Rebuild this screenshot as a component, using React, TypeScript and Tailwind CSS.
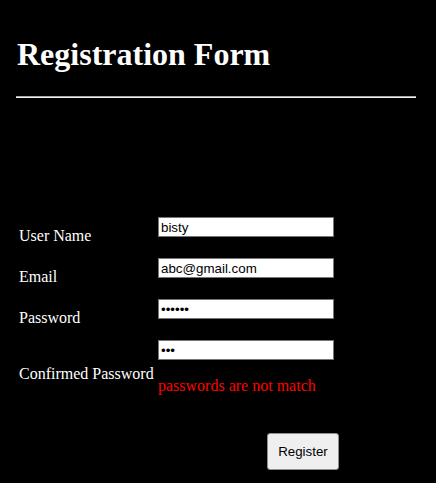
import React from "react";

function Field({ label, type, value, error }: { label: string; type: string; value: string; error?: string }) {
  return (
    <div className="flex items-center">
      <div className="w-[142px] pl-[3px] text-white text-[16px] leading-[18px] font-['Liberation_Serif','Times_New_Roman',serif]">
        {label}
      </div>
      <div className={error ? "pt-[2px] pb-[15px]" : "pt-[2px] h-[41px]"}>
        <input
          type={type}
          defaultValue={value}
          readOnly
          className="block w-[176px] h-[20px] bg-white border border-[#767676] px-[2px] text-[13.33px] text-black outline-none font-['Liberation_Sans',Arial,sans-serif]"
        />
        {error && (
          <div className="mt-[17px] text-[16px] leading-[18px] text-[#ff0000] font-['Liberation_Serif','Times_New_Roman',serif]">
            {error}
          </div>
        )}
      </div>
    </div>
  );
}

export default function App() {
  return (
    <div className="min-h-[483px] bg-black px-4 pt-[36px] font-['Liberation_Serif','Times_New_Roman',serif]">
      <h1 className="pl-[1px] text-[32px] leading-[37px] font-bold text-white">
        Registration Form
      </h1>
      <div className="mt-[23px] w-[400px] border-t border-b border-t-[#a8a8a8] border-b-[#eeeeee]" />
      <div className="mt-[117px] flex flex-col">
        <Field label="User Name" type="text" value="bisty" />
        <Field label="Email" type="text" value="abc@gmail.com" />
        <Field label="Password" type="password" value="123456" />
        <Field label="Confirmed Password" type="password" value="123" error="passwords are not match" />
      </div>
      <div className="mt-[23px] pl-[251px]">
        <button
          type="button"
          className="w-[72px] h-[37px] bg-[#efefef] border border-[#8f8f8f] rounded-[3px] text-[13.33px] text-black font-['Liberation_Sans',Arial,sans-serif]"
        >
          Register
        </button>
      </div>
    </div>
  );
}
